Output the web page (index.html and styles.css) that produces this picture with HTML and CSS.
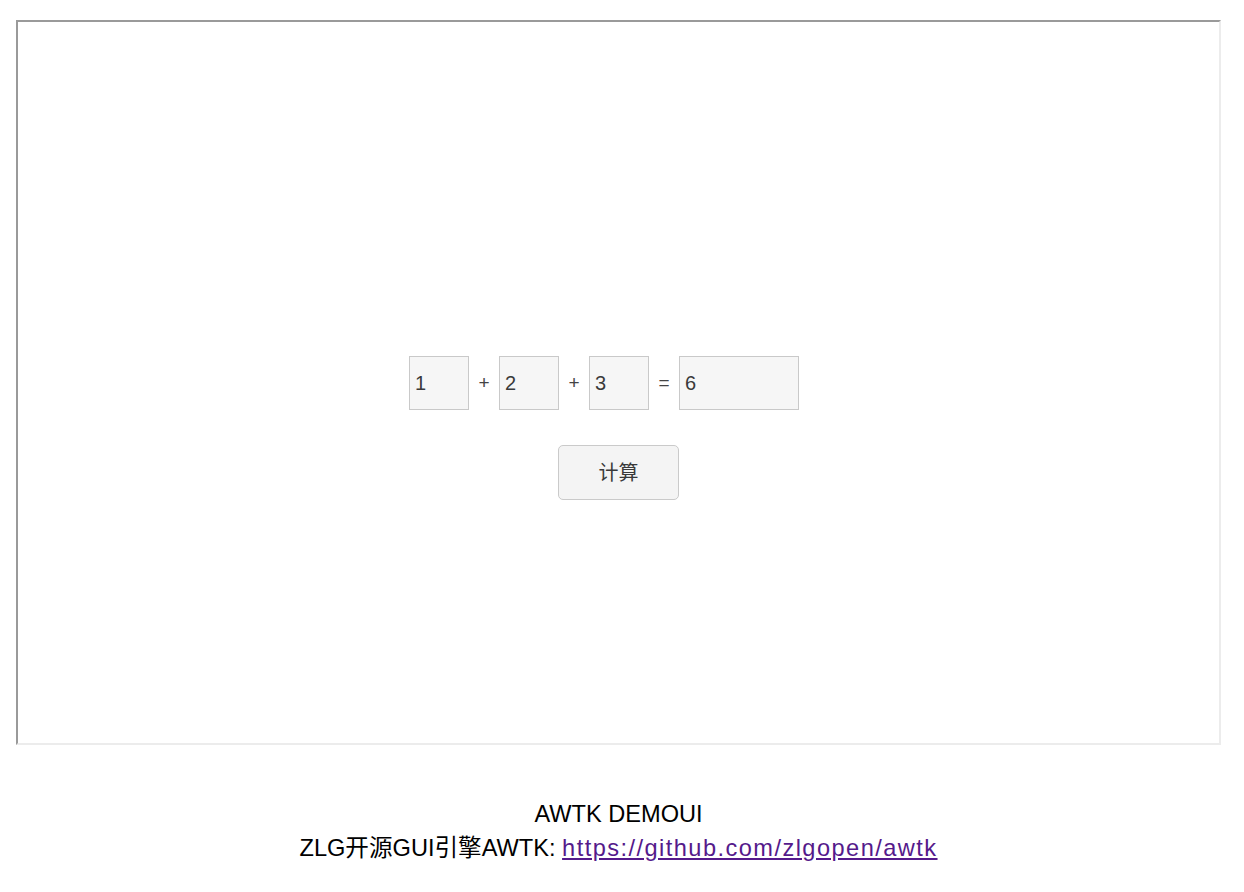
FILE: index.html
```html
<!DOCTYPE html>
<html lang="zh">
<head>
<meta charset="utf-8">
<title>AWTK DEMOUI</title>
<link rel="stylesheet" href="styles.css">
</head>
<body>
<div class="page">
  <div class="screen">
    <div class="calc-row">
      <div class="field field-small">1</div>
      <div class="op">+</div>
      <div class="field field-small">2</div>
      <div class="op">+</div>
      <div class="field field-small">3</div>
      <div class="op">=</div>
      <div class="field field-wide">6</div>
    </div>
    <div class="btn">计算</div>
  </div>
  <div class="footer">
    <div class="footer-line">AWTK DEMOUI</div>
    <div class="footer-line">ZLG开源GUI引擎AWTK: <a class="link" href="#">https://github.com/zlgopen/awtk</a></div>
  </div>
</div>
</body>
</html>
```

FILE: styles.css
```css
html, body {
  margin: 0;
  padding: 0;
  background: #ffffff;
}

body {
  font-family: "Liberation Sans", "Noto Sans CJK SC", sans-serif;
}

.page {
  padding: 20px 0 0 16px;
  width: 1205px;
}

.screen {
  box-sizing: border-box;
  width: 1205px;
  height: 725px;
  border-style: solid;
  border-width: 2px;
  border-color: #9a9a9a #ececec #ececec #9a9a9a;
  background: #ffffff;
  display: flex;
  flex-direction: column;
  padding-top: 334px;
}

.calc-row {
  display: flex;
  align-items: center;
  margin-left: 391px;
  height: 54px;
}

.field {
  box-sizing: border-box;
  height: 54px;
  border: 1px solid #c9c9c9;
  background: #f6f6f6;
  color: #3a3a3a;
  font-size: 20px;
  line-height: 52px;
  padding-left: 5px;
}

.field-small {
  width: 60px;
}

.field-wide {
  width: 120px;
}

.op {
  width: 30px;
  text-align: center;
  font-size: 19px;
  color: #444444;
}

.btn {
  box-sizing: border-box;
  align-self: center;
  margin-top: 35px;
  width: 121px;
  height: 55px;
  border: 1px solid #cacaca;
  border-radius: 5px;
  background: #f4f4f4;
  color: #3a3a3a;
  font-size: 20px;
  line-height: 55px;
  text-align: center;
}

.footer {
  margin-top: 52px;
  text-align: center;
  font-size: 23.6px;
  line-height: 34px;
  color: #000000;
}

.link {
  color: #551a8b;
  text-decoration: underline;
  letter-spacing: 1.45px;
}
```
